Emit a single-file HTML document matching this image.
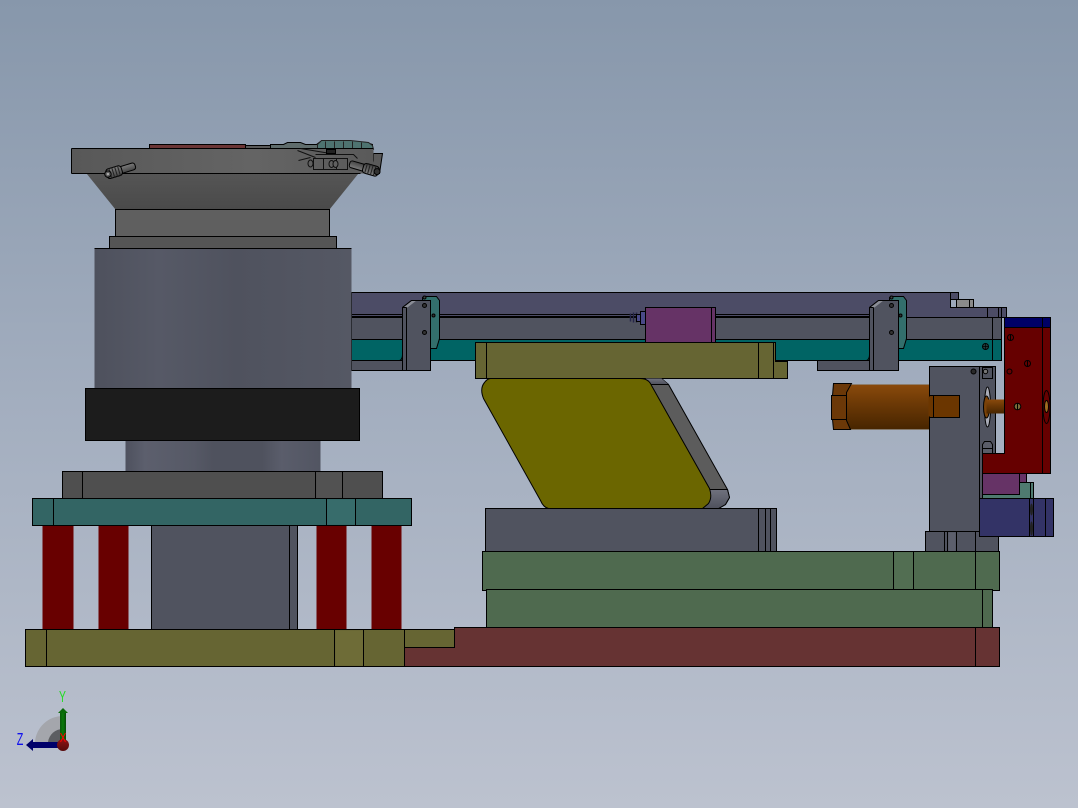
<!DOCTYPE html>
<html><head><meta charset="utf-8"><style>
html,body{margin:0;padding:0}
body{width:1078px;height:808px;overflow:hidden;background:linear-gradient(#8797ab,#a3aebf 50%,#bcc2cf)}
svg{display:block;position:absolute;left:0;top:0}
</style></head><body>
<svg width="1078" height="808" viewBox="0 0 1078 808" xmlns="http://www.w3.org/2000/svg">
<defs>
<linearGradient id="cyl" x1="0" x2="1" y1="0" y2="0"><stop offset="0" stop-color="#4e515d"/><stop offset=".25" stop-color="#565966"/><stop offset=".55" stop-color="#4f525e"/><stop offset="1" stop-color="#555864"/></linearGradient>
<linearGradient id="low" x1="0" x2="1" y1="0" y2="0"><stop offset="0" stop-color="#4e515e"/><stop offset=".1" stop-color="#5c5f6d"/><stop offset=".35" stop-color="#565966"/><stop offset=".45" stop-color="#4f525e"/><stop offset=".7" stop-color="#4f525e"/><stop offset=".8" stop-color="#5a5d6b"/><stop offset="1" stop-color="#525562"/></linearGradient>
<linearGradient id="cone" x1="0" x2="0" y1="0" y2="1"><stop offset="0" stop-color="#555"/><stop offset="1" stop-color="#4a4a4a"/></linearGradient>
<linearGradient id="plate" x1="0" x2="1" y1="0" y2="0"><stop offset="0" stop-color="#585858"/><stop offset=".6" stop-color="#646464"/><stop offset="1" stop-color="#5a5a5a"/></linearGradient>
<linearGradient id="orange" x1="0" x2="0" y1="0" y2="1"><stop offset="0" stop-color="#8a4a0c"/><stop offset=".4" stop-color="#6e3a06"/><stop offset="1" stop-color="#472500"/></linearGradient>
<linearGradient id="screw" x1="0" x2="0" y1="0" y2="1"><stop offset="0" stop-color="#7c7c7c"/><stop offset="1" stop-color="#444"/></linearGradient>
<linearGradient id="cap" x1="0" x2="0" y1="0" y2="1"><stop offset="0" stop-color="#70727e"/><stop offset="1" stop-color="#4e505c"/></linearGradient>
<linearGradient id="ball" x1="0" x2="0" y1="0" y2="1"><stop offset="0" stop-color="#8e1416"/><stop offset="1" stop-color="#560a0c"/></linearGradient>
<linearGradient id="grn" x1="0" x2="1" y1="0" y2="0"><stop offset="0" stop-color="#0a5a0a"/><stop offset=".5" stop-color="#0a7a0a"/><stop offset="1" stop-color="#064a06"/></linearGradient>
</defs>
<g transform="translate(.5 .5)" stroke="#000" stroke-width="1" stroke-linejoin="miter">

<!-- feeder top details -->
<rect x="149" y="144" width="96" height="4" fill="#6b3535"/>
<rect x="245" y="145" width="25" height="3" fill="#5a5a5a"/>
<path d="M270 148V144H283L287 142H300L305 144H316L320 141H345L366 142L372 144V148Z" fill="#5f6c6c"/>
<path d="M317 148V144L321 140H350L368 142L372 145L373 149Z" fill="#4e7370" stroke="#222"/>
<path d="M325 141V148M334 141V148M343 141V148M352 141V148M361 142V148" fill="none" stroke="#222"/>
<path d="M373 153H382L379 173H370L373 160Z" fill="#5a5a5a"/>

<!-- feeder bowl -->
<rect x="71" y="148" width="302" height="25" fill="url(#plate)" stroke="none"/>
<path d="M71 148H373M71 173H359M71 148V173" fill="none"/>
<path d="M86 173H358L329 209H115Z" fill="url(#cone)" stroke="none"/>
<path d="M71 173H360" fill="none"/>
<rect x="115" y="209" width="214" height="27" fill="#5f5f5f"/>
<rect x="109" y="236" width="227" height="12" fill="#555"/>

<!-- bowl bracket details -->
<path d="M297 150L315 157M298 160L310 157M315 154H353L357 158M313 158H347V169H313Z" fill="none" stroke="#111"/>
<path d="M323 158V169M336 158V169M300 148L330 153" fill="none" stroke="#111"/>
<ellipse cx="310" cy="163" rx="2.5" ry="3.5" fill="#606060" stroke="#111"/>
<ellipse cx="331" cy="163.500" rx="2.500" ry="3.500" fill="#606060" stroke="#111"/>
<ellipse cx="335" cy="163.500" rx="2.500" ry="3.500" fill="#606060" stroke="#111"/>
<rect x="326" y="149" width="9" height="4" fill="#222"/>

<!-- screws -->
<g transform="translate(106 174) rotate(-17)">
<rect x="13" y="-3.500" width="17" height="7" rx="2.500" fill="url(#screw)"/>
<rect x="0" y="-5" width="16" height="10" rx="3" fill="url(#screw)"/>
<path d="M4 -5V5M7 -5V5M10 -5V5M13 -5V5" fill="none" stroke="#222"/>
<circle cx="1.500" cy="0" r="3.200" fill="#555"/>
<circle cx="1.500" cy="0" r="1.300" fill="#aaa" stroke="none"/>
</g>
<g transform="translate(378 171.500) rotate(196)">
<rect x="13" y="-3.500" width="17" height="7" rx="2.500" fill="url(#screw)"/>
<rect x="0" y="-5" width="16" height="10" rx="3" fill="url(#screw)"/>
<path d="M4 -5V5M7 -5V5M10 -5V5M13 -5V5" fill="none" stroke="#222"/>
<circle cx="1.500" cy="0" r="3" fill="#333"/>
</g>

<!-- conveyor -->
<path d="M351 292H958V299H950V307H1006V317H351Z" fill="#4c4c66"/>
<path d="M950 292V307H958" fill="none"/>
<path d="M987 307V317M998 307V317M1001 307V317" fill="none"/>
<rect x="956" y="299" width="17" height="8" fill="#8a8a8a"/>
<path d="M969 299V307" fill="none"/>
<rect x="351" y="317" width="650" height="22" fill="#50535f"/>
<path d="M351 314H869" fill="none"/>
<path d="M351 316.500H869" fill="none" stroke-width="2"/>
<rect x="351" y="339" width="650" height="21" fill="#006464"/>
<path d="M992 317V360" fill="none"/>
<rect x="351" y="360" width="53" height="10" fill="#50535f"/>
<rect x="817" y="360" width="81" height="10" fill="#50535f"/>
<circle cx="985" cy="346" r="3" fill="#204040"/>
<path d="M982 346H988M985 343V349" fill="none" stroke-width=".7"/>

<!-- brackets -->
<path d="M422 300V297L425 296H436L439 300V338L436 348H430V300Z" fill="#336f6c"/>
<circle cx="424" cy="297" r="1.500" fill="#444"/>
<path d="M402 370V307L411 300H430V370Z" fill="#50535f"/>
<path d="M402 307L411 300H416L407 307Z" fill="#8a8d96" stroke="none"/>
<path d="M406 307V370M402 307H406" fill="none"/>
<path d="M402 307L411 300H430" fill="none"/>
<path d="M351 360H399Q402 359 402 354V345" fill="none"/>
<circle cx="424" cy="305" r="2" fill="#333"/><circle cx="424" cy="332" r="2" fill="#333"/><circle cx="433" cy="315" r="1.500" fill="#333"/>
<path d="M889 300V297L892 296H903L906 300V338L903 348H898V300Z" fill="#336f6c"/>
<circle cx="891" cy="297" r="1.500" fill="#444"/>
<path d="M869 370V307L878 300H898V370Z" fill="#50535f"/>
<path d="M869 307L878 300H883L874 307Z" fill="#8a8d96" stroke="none"/>
<path d="M873 307V370M869 307H873" fill="none"/>
<path d="M869 307L878 300H898" fill="none"/>
<path d="M817 360H866Q869 359 869 354V345" fill="none"/>
<circle cx="891" cy="305" r="2" fill="#333"/><circle cx="891" cy="332" r="2" fill="#333"/><circle cx="900" cy="315" r="1.500" fill="#333"/>

<!-- purple block & spring -->
<rect x="645" y="307" width="70" height="35" fill="#663366"/>
<path d="M711 307V342" fill="none"/>
<path d="M630 313V321M633 312V322M636 312V322" fill="none" stroke="#26264a" stroke-width="1.500"/>
<rect x="636" y="314" width="4" height="7" fill="#4a4a88"/>
<rect x="640" y="311" width="5" height="13" fill="#4a4a88"/>

<!-- olive slide -->
<path d="M475 342H775V361H787V378H475Z" fill="#666533"/>
<path d="M486 342V378M758 342V378M773 342V378" fill="none"/>

<!-- tilted link -->
<path d="M640 378H661L668 384L727 489L729 497L725 504L718 508H700Z" fill="#5c5c5c"/>
<path d="M645 378H661L668 384H652Z" fill="url(#cap)" stroke="none"/>
<path d="M709 489H727L729 497L725 504L718 508H702L709 500Z" fill="url(#cap)"/>
<path d="M650 384H668" fill="none"/>
<path d="M490 378H640Q648 378 651 385L709 488Q712 497 708 503L702 508H548Q543 507 540 500L483 398Q479 388 484 382Q487 378 490 378Z" fill="#6b6600"/>

<!-- support block -->
<rect x="485" y="508" width="291" height="43" fill="#50535f"/>
<path d="M758 508V551M765 508V551M770 508V551" fill="none"/>

<!-- cylinder -->
<rect x="846" y="384" width="83" height="45" fill="url(#orange)" stroke="none"/>
<path d="M850 384H929M850 429H929" fill="none" stroke="#8a8070" stroke-opacity=".6"/>
<path d="M833 383H851L846 392V420L850 429H833L832 419H831V395H832Z" fill="#6b3808"/>
<path d="M831 395H846M831 419H846" fill="none"/>

<!-- vertical unit -->
<path d="M929 366H979V498H983V531H929Z" fill="#50535f"/>
<rect x="979" y="366" width="16" height="132" fill="#50535f"/>
<rect x="929" y="395" width="30" height="22" fill="#6b3600"/>
<path d="M929 396V416" fill="none" stroke="#6b3600" stroke-width="2"/>
<path d="M933 395V417" fill="none"/>
<rect x="982" y="367" width="10" height="11" fill="none"/>
<circle cx="973" cy="371" r="2.500" fill="#2a2a2a"/>
<circle cx="985" cy="371" r="2.200" fill="#777"/>
<ellipse cx="987" cy="406.500" rx="3" ry="20" fill="#a8abb6"/>
<ellipse cx="986" cy="406.500" rx="3" ry="11" fill="#7a4208"/>
<path d="M982 453V444L984 441H990L992 444V453Z" fill="#5a5d69"/>
<path d="M982 448H992" fill="none"/>
<rect x="986" y="399" width="18" height="14" fill="url(#orange)" stroke="none"/>
<rect x="925" y="531" width="73" height="20" fill="#50535f"/>
<path d="M944 531V551M947 531V551M956 531V551M975 531V551" fill="none"/>
<rect x="948" y="532" width="7" height="19" fill="#5c5f6c" stroke="none"/>

<!-- red column -->
<path d="M1004 317H1050V473H982V453H1004Z" fill="#660000"/>
<rect x="1004" y="317" width="46" height="10" fill="#000066"/>
<path d="M1042 317V473" fill="none"/>
<circle cx="1010" cy="337" r="3" fill="none"/><path d="M1010 334V340" fill="none"/>
<circle cx="1027" cy="363" r="3" fill="none"/><path d="M1027 360V366" fill="none"/>
<circle cx="1009" cy="371" r="2.500" fill="none"/>
<circle cx="1017" cy="406" r="3.300" fill="#7a6a3a"/><path d="M1017 403V409" fill="none"/>
<ellipse cx="1046" cy="406.500" rx="3.500" ry="16.500" fill="#660000"/>
<ellipse cx="1046" cy="406" rx="2" ry="6" fill="#a06a20"/>

<!-- lower blocks -->
<path d="M982 473H1026V482H1033V498H982Z" fill="#4f7a70"/>
<rect x="982" y="473" width="37" height="21" fill="#663366"/>
<path d="M1019 473V482H1026V473M1030 482V498" fill="none"/>
<rect x="1019" y="473" width="7" height="9" fill="#663366"/>
<rect x="979" y="498" width="74" height="38" fill="#333366"/>
<path d="M1029 498V536M1033 498V536M1045 498V536" fill="none"/>
<ellipse cx="1031" cy="509" rx="1.500" ry="6" fill="#222" stroke="none"/>
<ellipse cx="1031" cy="528" rx="1.500" ry="7" fill="#222" stroke="none"/>

<!-- green plates -->
<rect x="482" y="551" width="517" height="39" fill="#4f6a4f"/>
<rect x="894" y="552" width="19" height="37" fill="#526e52" stroke="none"/>
<path d="M893 551V589M913 551V589M975 551V589" fill="none"/>
<rect x="486" y="589" width="506" height="38" fill="#4f6a4f"/>
<path d="M982 589V627" fill="none"/>

<!-- red base -->
<path d="M404 629H454V647H404Z" fill="#666533"/>
<path d="M404 647H454V627H999V666H404Z" fill="#663333"/>
<path d="M975 627V666" fill="none"/>

<!-- left stack -->
<rect x="125" y="440" width="195" height="31" fill="url(#low)" stroke="none"/>
<rect x="94" y="248" width="257" height="140" fill="url(#cyl)" stroke="none"/>
<path d="M94 248H351" fill="none"/>
<rect x="85" y="388" width="274" height="52" fill="#1c1c1c"/>
<rect x="62" y="471" width="320" height="27" fill="#4f4f4f"/>
<rect x="316" y="472" width="26" height="26" fill="#525252" stroke="none"/>
<path d="M82 471V498M315 471V498M342 471V498" fill="none"/>
<rect x="42" y="525" width="31" height="104" fill="#680000" stroke="none"/>
<rect x="98" y="525" width="30" height="104" fill="#680000" stroke="none"/>
<rect x="316" y="525" width="30" height="104" fill="#680000" stroke="none"/>
<rect x="371" y="525" width="30" height="104" fill="#680000" stroke="none"/>
<rect x="151" y="525" width="146" height="104" fill="#50535f"/>
<path d="M289 525V629" fill="none"/>
<rect x="32" y="498" width="379" height="27" fill="#336564"/>
<rect x="326" y="499" width="29" height="25" fill="#376c6b" stroke="none"/>
<path d="M53 498V525M326 498V525M355 498V525" fill="none"/>
<rect x="25" y="629" width="379" height="37" fill="#666533"/>
<rect x="335" y="630" width="28" height="35" fill="#6e6c37" stroke="none"/>
<path d="M46 629V666M334 629V666M363 629V666" fill="none"/>
</g>

<!-- triad -->
<g>
<path d="M35 742A28 28 0 0 1 63 716V742Z" fill="#a4a6ac"/>
<path d="M48 742A15 15 0 0 1 63 729V742Z" fill="#5c5e62"/>
<rect x="60" y="712" width="6" height="30" fill="url(#grn)"/>
<path d="M58 713L63 708L68 713Z" fill="#0a6a0a"/>
<rect x="33" y="742" width="27" height="6" fill="#00006a"/>
<path d="M33 739L26 745L33 751Z" fill="#00006a"/>
<circle cx="63" cy="745" r="6" fill="url(#ball)"/>
<path d="M60.500 733L65.500 742M65.500 733L60.500 742" stroke="#f00" stroke-width="1" fill="none"/>
<text transform="translate(62.500 702) scale(.65 1)" font-family="Liberation Sans, sans-serif" font-size="16" fill="#22dd22" text-anchor="middle">Y</text>
<text transform="translate(20 745) scale(.6 1)" font-family="Liberation Sans, sans-serif" font-size="18" fill="#1010ee" text-anchor="middle">Z</text>
</g>
</svg>
</body></html>
